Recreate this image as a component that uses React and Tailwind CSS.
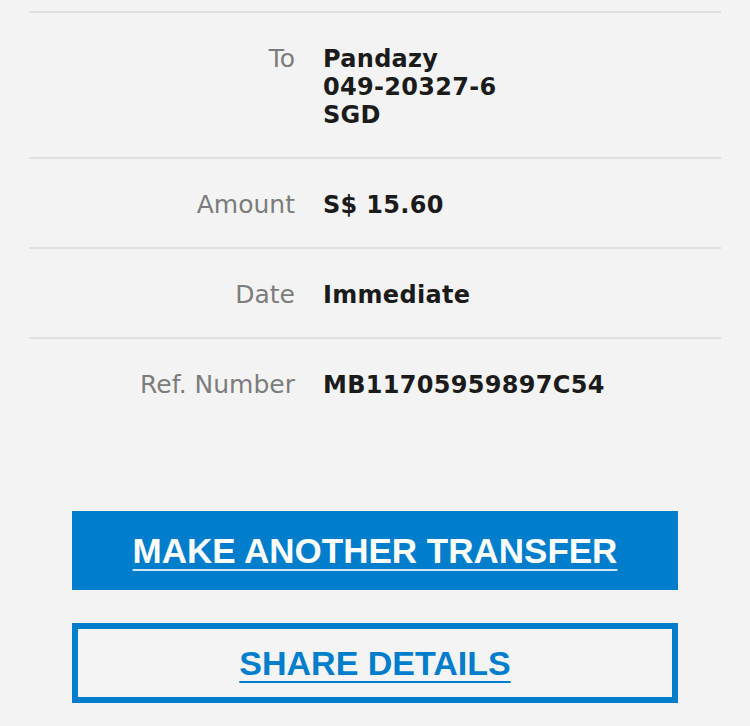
const rows = [
  { label: "To", value: ["Pandazy", "049-20327-6", "SGD"] },
  { label: "Amount", value: ["S$ 15.60"] },
  { label: "Date", value: ["Immediate"] },
  { label: "Ref. Number", value: ["MB11705959897C54"], last: true },
];

const App = () => {
  return (
    <main className="min-h-[726px] bg-[#f3f3f3] pt-[11px] font-['DejaVu_Sans',sans-serif]">
      {/* Transfer summary rows */}
      <div className="mx-[29px] border-t-2 border-[#dfdfdf]">
        {rows.map((row) => (
          <div
            key={row.label}
            className={`flex gap-[28px] pt-[32px] pb-[28px] ${row.last ? "" : "border-b-2 border-[#dfdfdf]"}`}
          >
            <div className="w-[266px] shrink-0 text-right text-[25px] leading-[28px] font-normal text-[#7c7c7c]">
              {row.label}
            </div>
            <div className="text-[24px] leading-[28px] font-bold text-[#1b1b1b] tracking-[0.3px]">
              {row.value.map((line) => (
                <div key={line}>{line}</div>
              ))}
            </div>
          </div>
        ))}
      </div>

      {/* Action buttons */}
      <div className="mx-[72px] mt-[84px] flex flex-col gap-[33px] font-['Liberation_Sans',sans-serif] font-bold">
        <button className="h-[79px] bg-[#007ecc] text-white text-[35px] leading-none">
          <span className="underline decoration-2 underline-offset-[6px] decoration-[#cfe6f5]">
            MAKE ANOTHER TRANSFER
          </span>
        </button>
        <button className="h-[80px] border-[6px] border-[#007ecc] bg-[#f4f4f4] text-[#007ecc] text-[34px] leading-none">
          <span className="underline decoration-2 underline-offset-[6px]">
            SHARE DETAILS
          </span>
        </button>
      </div>
    </main>
  );
};

export default App;
